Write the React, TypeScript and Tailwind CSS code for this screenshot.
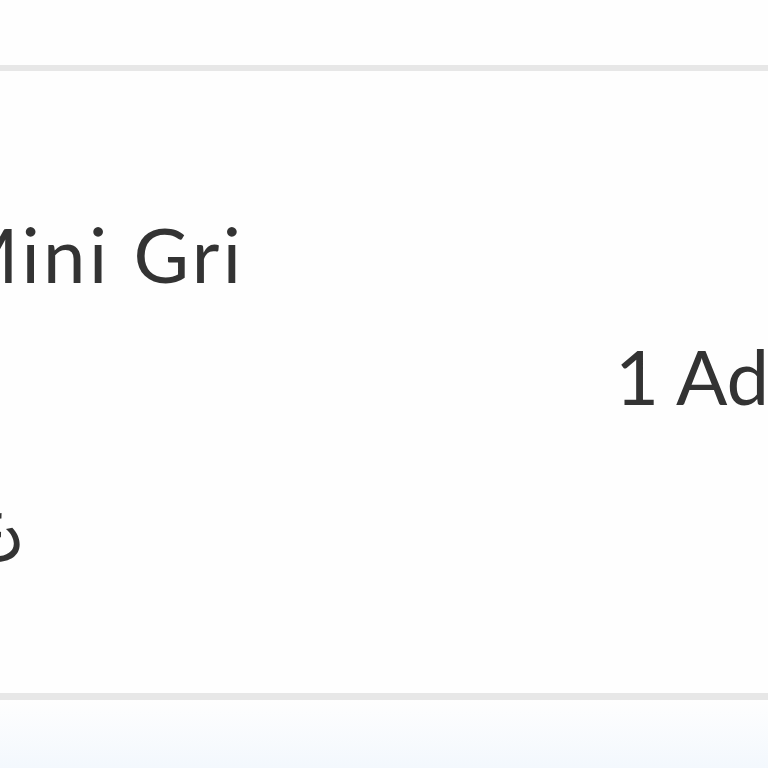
import React from 'react';

export default function App() {
  return (
    <div className="w-[768px] h-[768px] overflow-hidden bg-[#fefefe] flex flex-col text-[#333333]" style={{ fontFamily: 'Lato, "Noto Sans CJK JP", sans-serif' }}>
      <div className="h-[65px] shrink-0" />
      <div className="h-[6px] shrink-0 bg-[#e7e7e7]" />
      <div className="h-[622px] shrink-0 flex flex-col overflow-hidden">
        <div className="pt-[145px] ml-[-52px] whitespace-nowrap text-[76px] leading-none tracking-[0.045em]">Mini Gri</div>
        <div className="mt-[46px] pl-[615px] whitespace-nowrap text-[76px] leading-none">1 Add</div>
        <div className="mt-[80px] ml-[-43px] whitespace-nowrap text-[72px] leading-none">も</div>
      </div>
      <div className="h-[7px] shrink-0 bg-[#e7e7e7]" />
      <div className="flex-1 bg-gradient-to-b from-[#fefefe] to-[#f3f8fd]" />
    </div>
  );
}
